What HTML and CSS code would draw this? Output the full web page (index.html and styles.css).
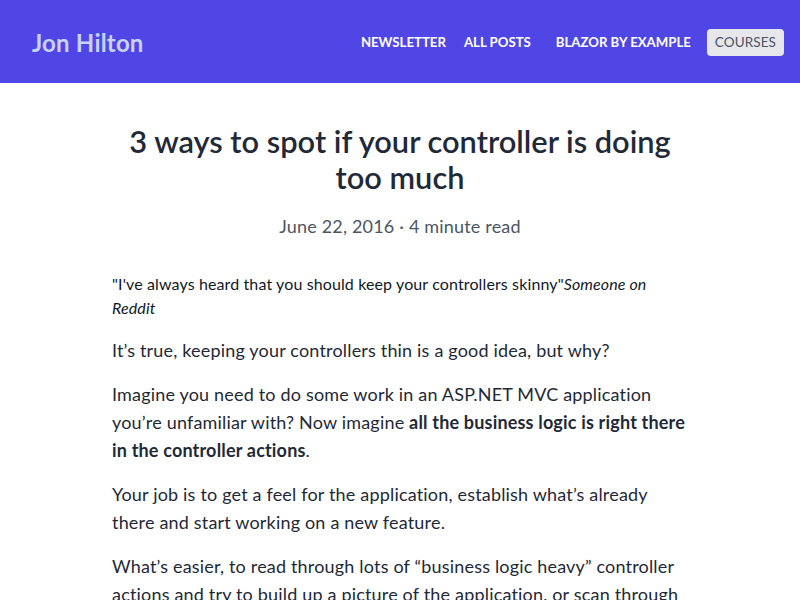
FILE: index.html
```
<!DOCTYPE html>
<html>
<head>
<meta charset="utf-8">
<link rel="stylesheet" href="styles.css">
</head>
<body>
<header class="header">
  <a class="brand" href="#">Jon Hilton</a>
  <nav class="nav">
    <a class="nav-link" href="#">Newsletter</a>
    <a class="nav-link" href="#">All posts</a>
    <a class="nav-link nav-link-wide" href="#">Blazor by Example</a>
    <a class="nav-button" href="#">Courses</a>
  </nav>
</header>
<main class="post">
  <h1 class="post-title">3 ways to spot if your controller is doing too much</h1>
  <p class="post-meta">June 22, 2016 · 4 minute read</p>
  <blockquote class="quote">"I've always heard that you should keep your controllers skinny"<cite>Someone on Reddit</cite></blockquote>
  <p>It’s true, keeping your controllers thin is a good idea, but why?</p>
  <p>Imagine you need to do some work in an ASP.NET MVC application you’re unfamiliar with? Now imagine <strong>all the business logic is right there in the controller actions</strong>.</p>
  <p>Your job is to get a feel for the application, establish what’s already there and start working on a new feature.</p>
  <p>What’s easier, to read through lots of “business logic heavy” controller actions and try to build up a picture of the application, or scan through a handful of controllers which delegate to other classes?</p>
</main>
</body>
</html>
```
FILE: styles.css
```
* { box-sizing: border-box; }
body {
  margin: 0;
  font-family: "Lato", "Open Sans", sans-serif;
  color: #1f2937;
  background: #fff;
}
a { text-decoration: none; }
.header {
  height: 83px;
  background: #4f46e5;
  display: flex;
  align-items: center;
  justify-content: space-between;
  padding: 0 16px 0 32px;
}
.brand {
  color: #c7d2fe;
  font-size: 24px;
  font-weight: 700;
  letter-spacing: 0.2px;
  margin-top: 2px;
}
.nav {
  display: flex;
  align-items: center;
}
.nav-link {
  color: #fff;
  font-size: 13.2px;
  font-weight: 700;
  text-transform: uppercase;
  margin-right: 16px;
}
.nav-link:first-child { margin-right: 18px; }
.nav-link-wide { margin-left: 9px; }
.nav-button {
  display: inline-block;
  color: #4b5563;
  background: #e5e7eb;
  font-size: 13.5px;
  line-height: 17px;
  text-transform: uppercase;
  padding: 5px 8px;
  margin-top: 2px;
  border-radius: 4px;
  letter-spacing: 0.1px;
}
.post {
  width: 576px;
  margin: 0 auto;
  padding-top: 41px;
  font-size: 18px;
  line-height: 28px;
  letter-spacing: 0.18px;
}
.post-title {
  font-size: 30.8px;
  line-height: 36px;
  font-weight: 600;
  text-align: center;
  margin: 0 8px;
  letter-spacing: 0;
  color: #1f2937;
}
.quote {
  margin: 32px 0 0;
  font-size: 16px;
  line-height: 24px;
  letter-spacing: 0.12px;
  color: #111827;
}
.quote cite { font-style: italic; }
.post p { margin: 16px 0 0; }
.post p.post-meta {
  text-align: center;
  color: #4b5563;
  margin-top: 16px;
}
strong { font-weight: 700; }
```
